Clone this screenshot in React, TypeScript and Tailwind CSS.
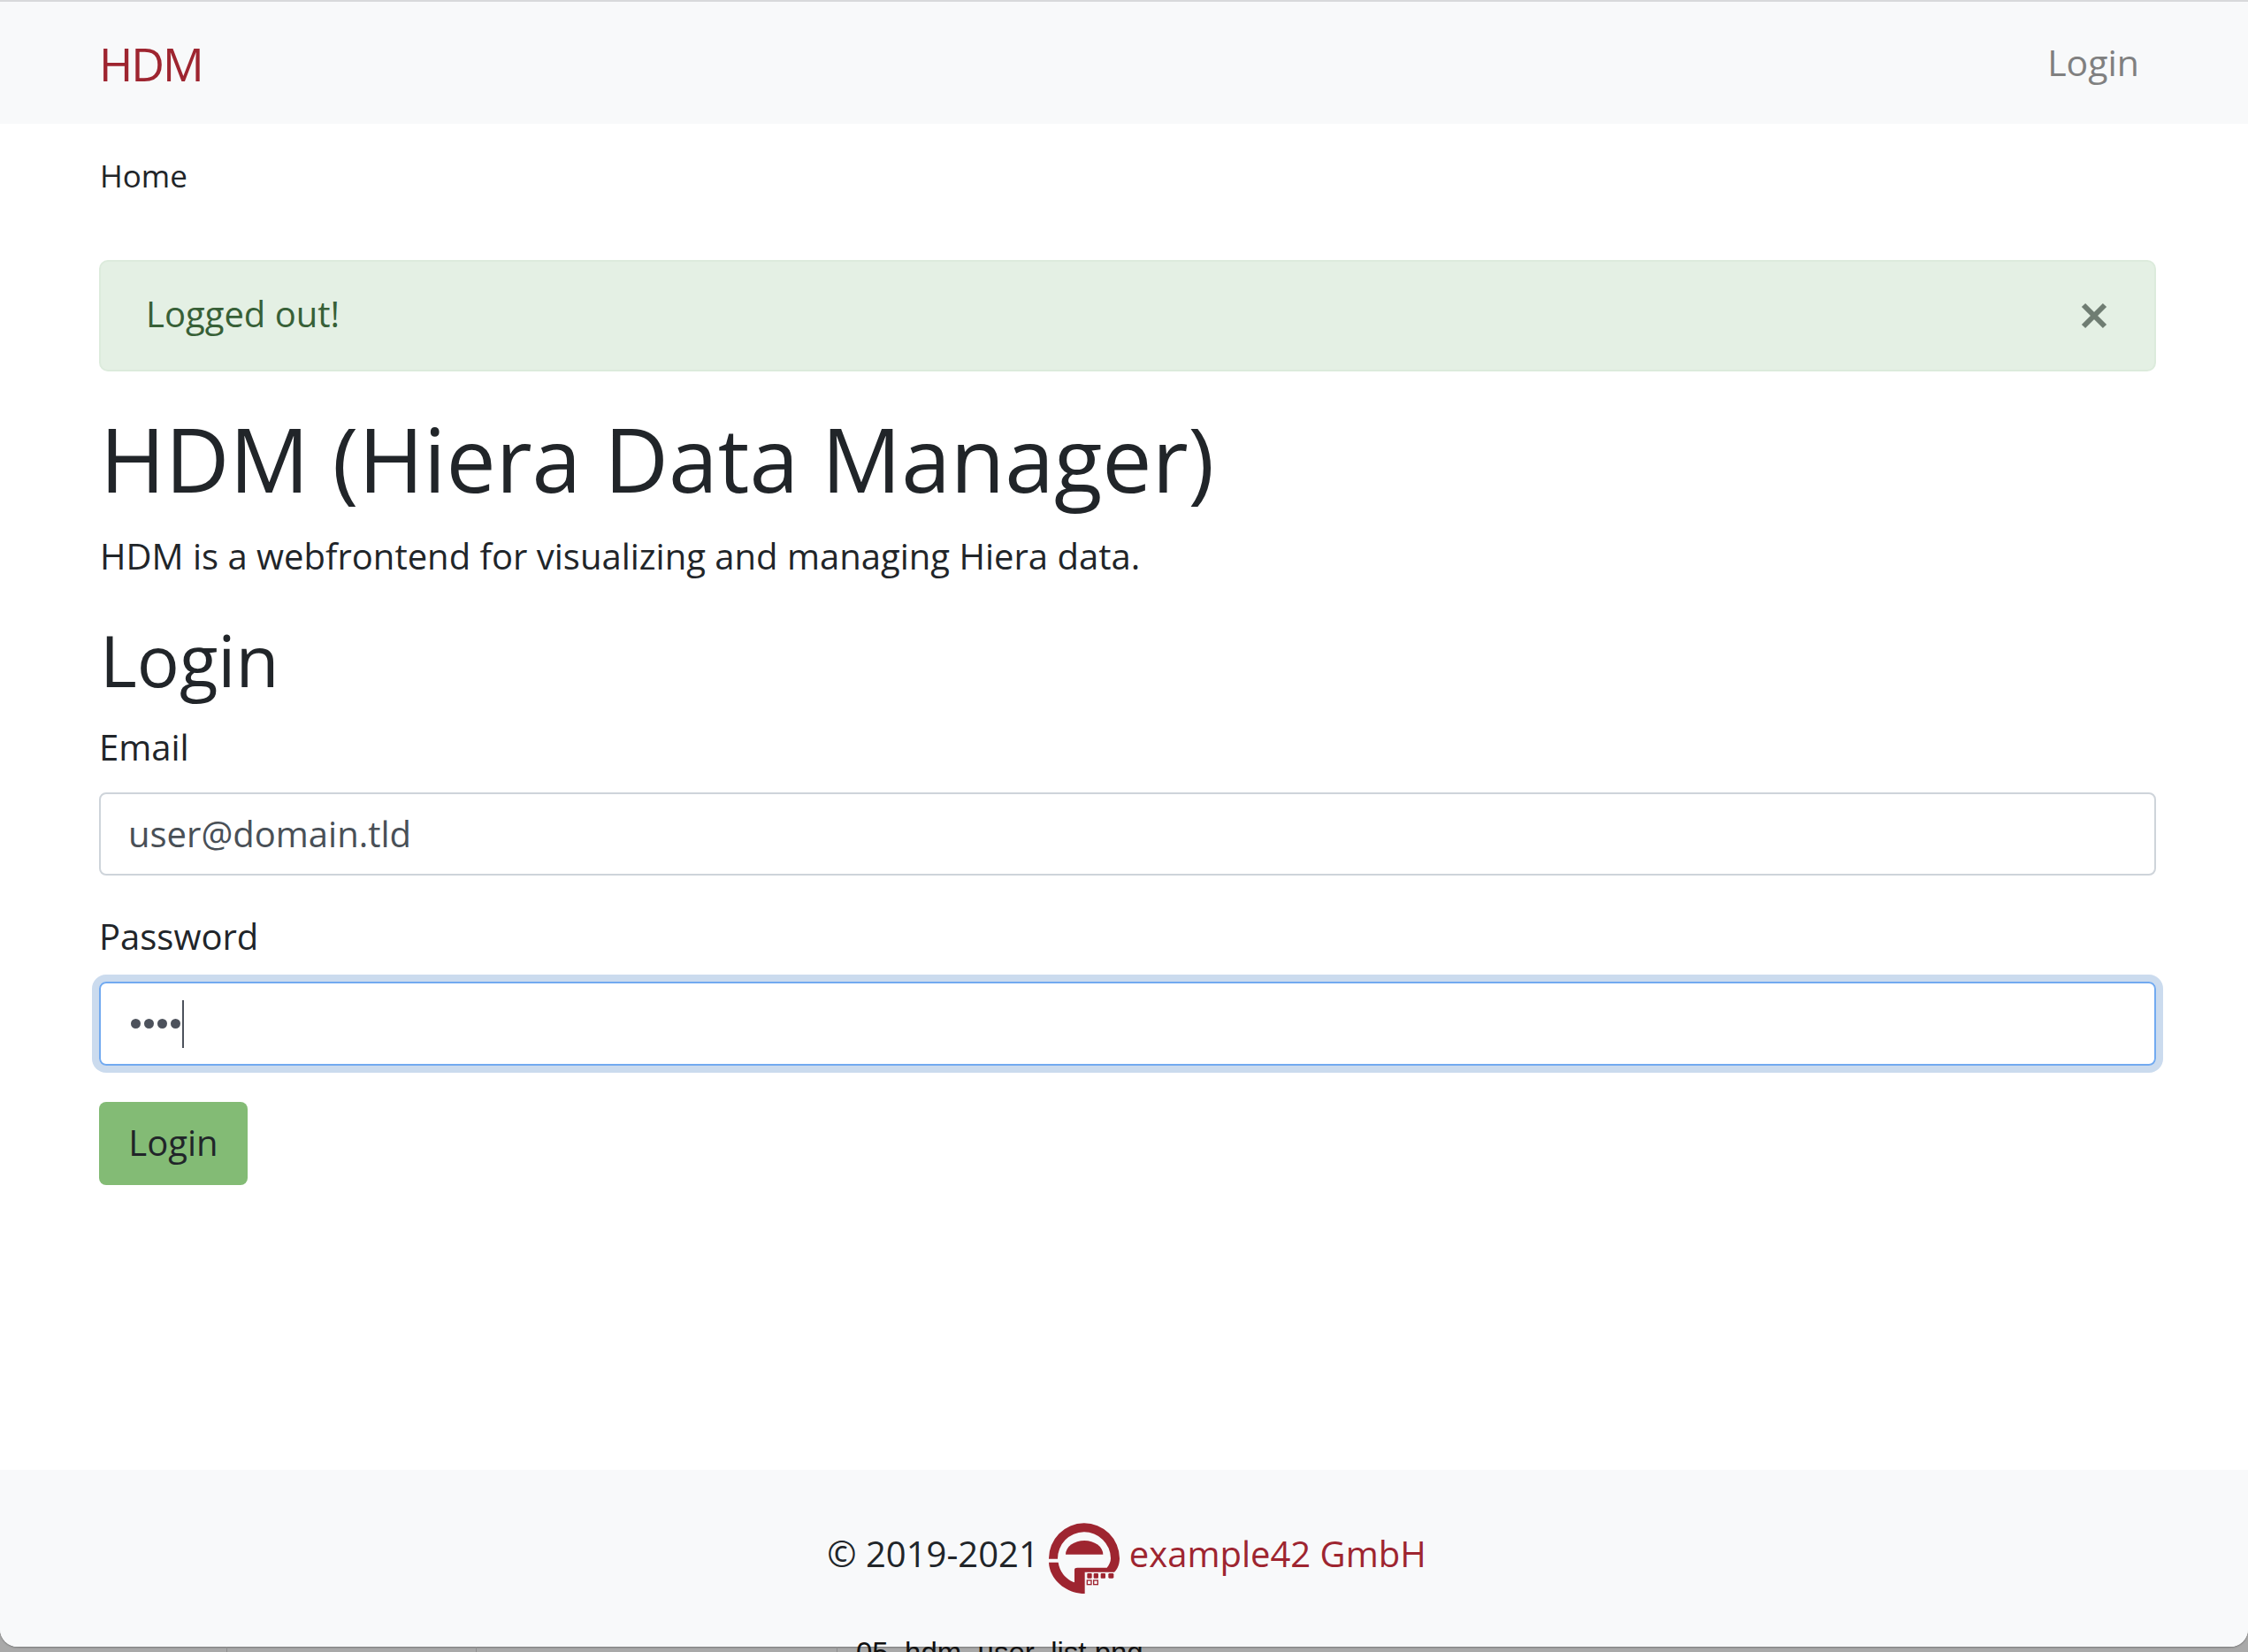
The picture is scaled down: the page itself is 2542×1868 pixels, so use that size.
const Logo = () => (
  <svg viewBox="48 36 240 240" className="w-[80px] h-[80px] shrink-0" aria-label="example42 logo">
    <path
      fill="#9e2530"
      d="M48 158A120 120 0 0 1 288 156C288 175 282 192 270 203H170V276C104 276 50 226 48 170H80C84 200 105 228 135 238V195Q135 188 145 188H245C253 178 258 168 258 156A90 90 0 0 0 78 158Z"
    />
    <path fill="#9e2530" d="M105 143A63.5 47 0 0 1 232 143Z" />
    <g fill="#9e2530">
      <rect x="178" y="207" width="16" height="17" rx="3" />
      <rect x="200" y="207" width="16" height="17" rx="3" />
      <rect x="224" y="207" width="16" height="17" rx="3" />
      <rect x="250" y="207" width="18" height="17" rx="4" />
    </g>
    <g fill="none" stroke="#9e2530" strokeWidth="4">
      <rect x="178" y="231" width="14" height="14" />
      <rect x="200" y="231" width="14" height="14" />
    </g>
  </svg>
)

const Field = ({ label, children }: { label: string; children: React.ReactNode }) => (
  <div className="mb-[41px]">
    <label className="block text-[40px] leading-[56px] mb-[23px] text-[#212529]">{label}</label>
    {children}
  </div>
)

export default function App() {
  return (
    <div className="h-[1868px] bg-[#a9a9a9] overflow-hidden font-['Open_Sans',sans-serif] text-[#212529]">
      <div className="h-[1862px] flex flex-col bg-white rounded-b-[20px] overflow-hidden border-t-2 border-[#d8d9db] shadow-[0_1px_2px_#777]">
        <nav className="h-[138px] shrink-0 bg-[#f8f9fa] flex items-center justify-between pl-[112px] pr-[123px]">
          <a className="text-[52px] tracking-[-2px] text-[#9e2530] mt-[2px]">HDM</a>
          <a className="text-[41px] text-[#808080]">Login</a>
        </nav>
        <main className="flex-1 pl-[112px] pr-[104px]">
          <div className="h-[154px] pt-[33px] pl-[1px] text-[35px] leading-[52px]">Home</div>
          <div className="h-[126px] flex items-center justify-between rounded-[10px] border-2 border-[#dcebdc] bg-[#e4f0e4] pl-[51px] pr-[53px] text-[#376037] text-[40px]">
            <span className="mb-[4px]">Logged out!</span>
            <svg viewBox="0 0 30 30" className="w-[30px] h-[30px]" aria-label="Close">
              <path d="M3 3L27 27M27 3L3 27" stroke="#6f7d72" strokeWidth="6" />
            </svg>
          </div>
          <h1 className="mt-[38px] pl-[1px] text-[100.2px] leading-[120px]">HDM (Hiera Data Manager)</h1>
          <p className="mt-[21px] pl-[1px] text-[40px] leading-[60px]">HDM is a webfrontend for visualizing and managing Hiera data.</p>
          <h2 className="mt-[39px] pl-[1px] text-[80px] leading-[96px] mb-[23px]">Login</h2>
          <Field label="Email">
            <div className="h-[94px] flex items-center rounded-[8px] border-2 border-[#ced4da] px-[31px] text-[40px] text-[#495057]">user@domain.tld</div>
          </Field>
          <Field label="Password">
            <div className="h-[95px] flex items-center rounded-[8px] border-2 border-[#72aaf0] shadow-[0_0_0_8px_#cbdbee] px-[34px] text-[#495057]">
              <span className="flex gap-[4px] -mt-[1px]">
                <i className="w-[11px] h-[11px] rounded-full bg-[#4d525c]" />
                <i className="w-[11px] h-[11px] rounded-full bg-[#4d525c]" />
                <i className="w-[11px] h-[11px] rounded-full bg-[#4d525c]" />
                <i className="w-[11px] h-[11px] rounded-full bg-[#4d525c]" />
              </span>
              <i className="ml-[2px] w-[2px] h-[54px] bg-[#4d525c]" />
            </div>
          </Field>
          <button type="button" className="w-[168px] h-[94px] pb-[3px] rounded-[8px] bg-[#83bb75] text-[40px] text-[#212529]">Login</button>
        </main>
        <footer className="h-[200px] shrink-0 bg-[#f8f9fa] flex items-center justify-center gap-[11px] pl-[6px] text-[40px]">
          <span className="mb-[10px]">© 2019-2021</span>
          <Logo />
          <a className="text-[#9e2530] mb-[10px]">example42 GmbH</a>
        </footer>
      </div>
      <div className="flex h-[6px] text-[33px] leading-[26px] font-['Liberation_Sans',sans-serif] text-[#111]">
        <div className="w-[257px] border-r border-[#8f8f8f]" />
        <div className="w-[282px] border-r border-[#8f8f8f]" />
        <div className="w-[408px] border-r border-[#8f8f8f]" />
        <div className="pl-[21px] -mt-[6px]">05_hdm_user_list.png</div>
      </div>
    </div>
  )
}
